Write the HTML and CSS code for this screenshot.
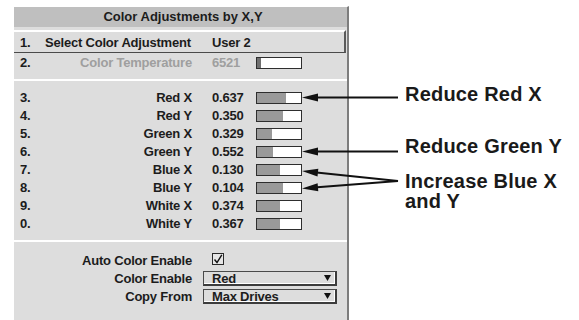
FILE: index.html
```html
<!DOCTYPE html>
<html>
<head>
<meta charset="utf-8">
<link rel="stylesheet" href="styles.css">
</head>
<body>
<div class="page">
  <div class="panel">
    <div class="header">Color Adjustments by X,Y</div>
    <div class="row selected">
      <span class="num">1.</span><span class="label left">Select Color Adjustment</span><span class="val">User 2</span>
    </div>
    <div class="row dim">
      <span class="num">2.</span><span class="label">Color Temperature</span><span class="val">6521</span><span class="bar"><span class="fill dark" style="width:4px"></span></span>
    </div>
    <div class="sep"></div>
    <div class="row"><span class="num">3.</span><span class="label">Red X</span><span class="val">0.637</span><span class="bar"><span class="fill" style="width:29px"></span></span></div>
    <div class="row"><span class="num">4.</span><span class="label">Red Y</span><span class="val">0.350</span><span class="bar"><span class="fill" style="width:26px"></span></span></div>
    <div class="row"><span class="num">5.</span><span class="label">Green X</span><span class="val">0.329</span><span class="bar"><span class="fill" style="width:15px"></span></span></div>
    <div class="row"><span class="num">6.</span><span class="label">Green Y</span><span class="val">0.552</span><span class="bar"><span class="fill" style="width:16px"></span></span></div>
    <div class="row"><span class="num">7.</span><span class="label">Blue X</span><span class="val">0.130</span><span class="bar"><span class="fill" style="width:23px"></span></span></div>
    <div class="row"><span class="num">8.</span><span class="label">Blue Y</span><span class="val">0.104</span><span class="bar"><span class="fill" style="width:26px"></span></span></div>
    <div class="row"><span class="num">9.</span><span class="label">White X</span><span class="val">0.374</span><span class="bar"><span class="fill" style="width:23px"></span></span></div>
    <div class="row"><span class="num">0.</span><span class="label">White Y</span><span class="val">0.367</span><span class="bar"><span class="fill" style="width:23px"></span></span></div>
    <div class="sep sep2"></div>
    <div class="row"><span class="num"></span><span class="label">Auto Color Enable</span>
      <span class="check"><svg width="10" height="10" viewBox="0 0 10 10"><path d="M1.5 5.5 L4 8.5 L8.8 0.8" fill="none" stroke="#111" stroke-width="1.4"/></svg></span>
    </div>
    <div class="row"><span class="num"></span><span class="label">Color Enable</span>
      <span class="select"><span class="opt">Red</span><svg class="caret" width="7" height="6" viewBox="0 0 7 6"><path d="M0 0 H7 L3.5 6 Z" fill="#111"/></svg></span>
    </div>
    <div class="row"><span class="num"></span><span class="label">Copy From</span>
      <span class="select"><span class="opt">Max Drives</span><svg class="caret" width="7" height="6" viewBox="0 0 7 6"><path d="M0 0 H7 L3.5 6 Z" fill="#111"/></svg></span>
    </div>
  </div>
  <div class="callouts">
    <div class="callout c1">Reduce Red X</div>
    <div class="callout c2">Reduce Green Y</div>
    <div class="callout c3">Increase Blue X<br>and Y</div>
  </div>
</div>
<svg class="arrows" width="579" height="320" viewBox="0 0 579 320">
  <g stroke="#111" stroke-width="2" fill="none">
    <line x1="314" y1="97.5" x2="398" y2="97.5"/>
    <line x1="314" y1="151.5" x2="398" y2="151.5"/>
    <line x1="314" y1="172.2" x2="398" y2="181"/>
    <line x1="314" y1="187.6" x2="398" y2="181"/>
  </g>
  <g fill="#111">
    <polygon points="302,97.5 318,93.5 318,101.5"/>
    <polygon points="302,151.5 318,147.5 318,155.5"/>
    <g transform="translate(302,171) rotate(5.9)"><polygon points="0,0 16,-4 16,4"/></g>
    <g transform="translate(302,188.5) rotate(-4.6)"><polygon points="0,0 16,-4 16,4"/></g>
  </g>
</svg>
</body>
</html>
```
FILE: styles.css
```css
html, body {
  margin: 0;
  padding: 0;
  background: #ffffff;
}
body {
  width: 579px;
  height: 320px;
  overflow: hidden;
  position: relative;
  font-family: "Liberation Sans", Arial, sans-serif;
  color: #1c1c1c;
}
.page {
  display: flex;
  align-items: flex-start;
  padding-top: 6px;
  padding-left: 14px;
}
.panel {
  width: 333px;
  height: 320px;
  background: #dddddd;
  border-top: 1px solid #ffffff;
  border-right: 2px solid #7d7d7d;
  box-sizing: content-box;
}
.header {
  height: 20px;
  line-height: 20px;
  background: #bfbfbf;
  text-align: center;
  font-size: 13px;
  font-weight: bold;
  padding-left: 5px;
  margin-bottom: 3px;
}
.row {
  display: flex;
  align-items: center;
  height: 18px;
  padding-left: 6px;
  font-size: 13px;
  letter-spacing: -0.2px;
  font-weight: bold;
  white-space: nowrap;
}
.row.selected {
  height: 20px;
  border-top: 2px solid #ffffff;
  border-bottom: 1px solid #4a4a4a;
  border-right: 2px solid #5a5a5a;
  margin-right: 1px;
}
.row.dim .label,
.row.dim .val {
  color: #9f9f9f;
}
.num {
  width: 25px;
  flex: none;
}
.label {
  width: 147px;
  flex: none;
  text-align: right;
}
.label.left {
  text-align: left;
}
.val {
  width: 44px;
  margin-left: 20px;
  flex: none;
}
.bar {
  display: flex;
  width: 44px;
  height: 10px;
  border: 1px solid #2e2e2e;
  background: #ffffff;
  margin-top: 1px;
}
.fill {
  display: block;
  height: 100%;
  background: #9a9a9a;
}
.fill.dark {
  background: #6f6f6f;
}
.sep {
  height: 2px;
  background: #ffffff;
  margin-top: 8px;
  margin-bottom: 7px;
}
.sep2 {
  margin-bottom: 9px;
}
.check {
  display: flex;
  align-items: center;
  justify-content: center;
  width: 10px;
  height: 10px;
  margin-left: 20px;
  margin-top: -3px;
  border: 1px solid #2a2a2a;
  background: #e6e6e6;
}
.select {
  display: flex;
  align-items: center;
  justify-content: space-between;
  box-sizing: border-box;
  width: 134px;
  height: 15px;
  margin-left: 11px;
  margin-top: 1px;
  padding-left: 8px;
  padding-right: 4px;
  border-top: 1px solid #4a4a4a;
  border-left: 1px solid #4a4a4a;
  border-right: 2px solid #3c3c3c;
  border-bottom: 2px solid #3c3c3c;
  box-shadow: inset -1px -1px 0 #ffffff;
  background: #dddddd;
}
.opt {
  line-height: 13px;
}
.caret {
  display: block;
}
.callouts {
  display: flex;
  flex-direction: column;
  margin-left: 56px;
  font-size: 20px;
  font-weight: bold;
  line-height: 20px;
  color: #1a1a1a;
  letter-spacing: 0.2px;
  white-space: nowrap;
}
.c1 {
  margin-top: 78px;
}
.c2 {
  margin-top: 32px;
}
.c3 {
  margin-top: 15px;
}
.arrows {
  position: absolute;
  top: 0;
  left: 0;
  pointer-events: none;
}
```
